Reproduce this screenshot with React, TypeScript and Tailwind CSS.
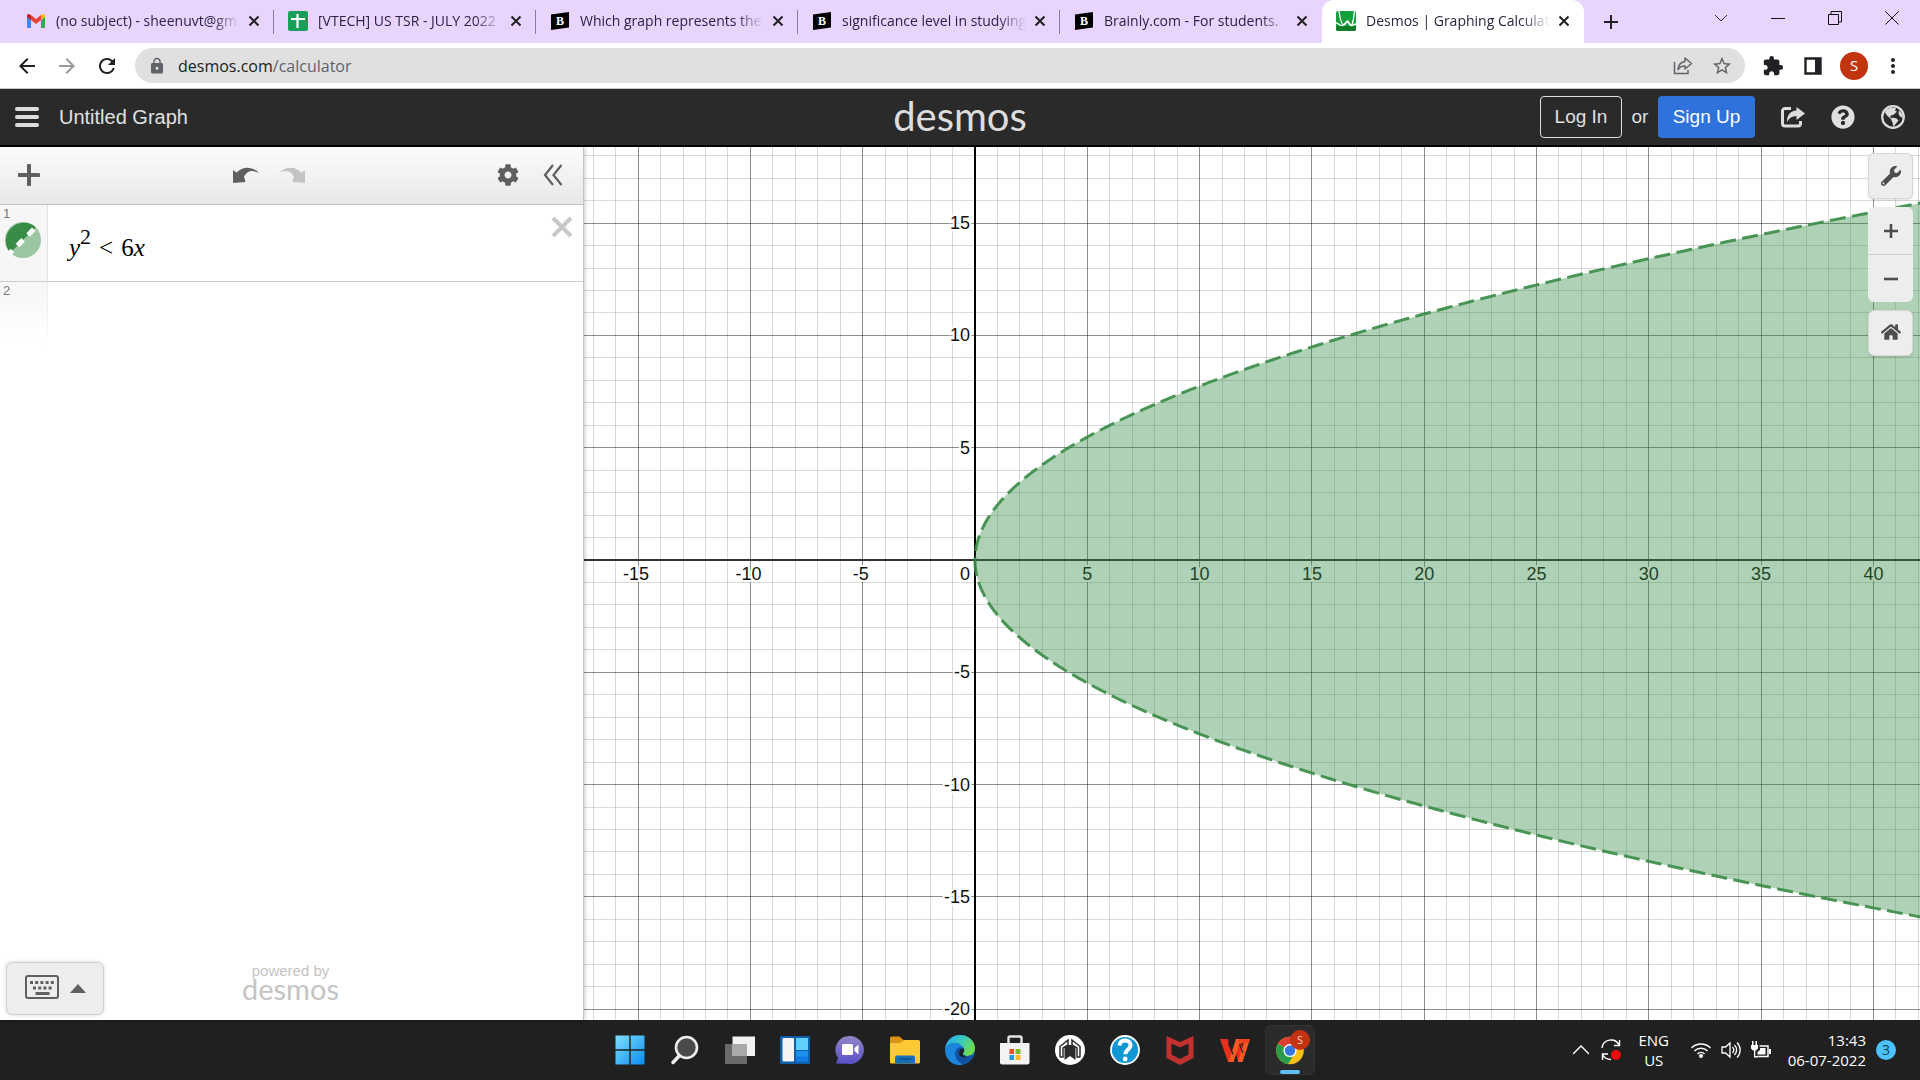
import React from 'react';
import { FaWrench, FaHome, FaCog, FaQuestionCircle } from 'react-icons/fa';
import { MdArrowBack, MdArrowForward, MdRefresh, MdLock, MdStarBorder, MdExtension, MdMoreVert } from 'react-icons/md';

const GmailIcon = () => (
  <svg viewBox="0 0 18 14" className="w-[18px] h-[14px]">
    <path d="M0 2v10.800a1.200 1.200 0 0 0 1.200 1.200H4V6z" fill="#4285f4" />
    <path d="M18 2v10.800a1.200 1.200 0 0 1-1.200 1.200H14V6z" fill="#34a853" />
    <path d="M14 1.500V6l4-3V2c0-2-2.200-2.600-3.500-1z" fill="#fbbc04" />
    <path d="M4 6V1l5 4 5-4v5L9 10z" fill="#ea4335" />
    <path d="M0 2c0-2 2.200-2.600 3.500-1L4 1.500V6L0 3z" fill="#c5221f" />
  </svg>
);

const SheetsIcon = () => (
  <svg viewBox="0 0 20 20" className="w-5 h-5">
    <rect width="20" height="20" rx="2" fill="#189f58" />
    <path d="M9.500 3v14M3 8h14" stroke="#fff" strokeWidth="2.200" />
  </svg>
);

const BrainlyIcon = () => (
  <svg viewBox="0 0 18 18" className="w-[18px] h-[18px]">
    <path d="M0 2.500L18 0v15.500L0 18z" fill="#000" />
    <text x="9" y="13" fontSize="12" fontWeight="700" textAnchor="middle" fill="#fff" fontFamily="Liberation Serif, serif">B</text>
  </svg>
);

const DesmosIcon = () => (
  <svg viewBox="0 0 20 20" className="w-5 h-5">
    <rect width="20" height="20" rx="2" fill="#12a03c" />
    <path d="M0 15h20v3a2 2 0 0 1-2 2H2a2 2 0 0 1-2-2z" fill="#0b7c2b" />
    <path d="M3 0c1 8 2.500 14 5 14 2 0 2-4 3.500-4s2 4 3.500 4c2 0 2.500-6 3.500-14" fill="none" stroke="#fff" strokeWidth="1.300" />
    <path d="M0 12c3 0 3 3 6 2.500S9 11 11 11s2 3 4 3.500 3-1.500 5-1.500" fill="none" stroke="#fff" strokeWidth="1.300" />
  </svg>
);

const CloseIcon = () => (
  <svg viewBox="0 0 12 12" className="w-3 h-3">
    <path d="M1.500 1.500l9 9M10.500 1.500l-9 9" stroke="#202124" strokeWidth="2" />
  </svg>
);

const tabs = [
  { title: '(no subject) - sheenuvt@gm', icon: <GmailIcon /> },
  { title: '[VTECH] US TSR - JULY 2022', icon: <SheetsIcon /> },
  { title: 'Which graph represents the', icon: <BrainlyIcon /> },
  { title: 'significance level in studying', icon: <BrainlyIcon /> },
  { title: 'Brainly.com - For students.', icon: <BrainlyIcon /> },
  { title: 'Desmos | Graphing Calculat', icon: <DesmosIcon />, active: true },
];

const TabStrip: React.FC = () => {
  return (
    <div className="flex h-[43px] shrink-0 items-stretch justify-between bg-[#e8d4fe]">
      <div className="flex min-w-0 pl-3">
        {tabs.map((tab, i) => (
          <div
            key={tab.title}
            className={
              tab.active
                ? 'relative flex w-[262px] items-center rounded-t-xl bg-white px-[14px] pb-[2px]'
                : 'relative flex w-[262px] items-center px-[14px] pb-[2px]'
            }
          >
            <span className="flex w-5 shrink-0 justify-center">{tab.icon}</span>
            <span className="ml-[10px] mr-2 flex-1 overflow-hidden whitespace-nowrap text-sm text-[#2b2340] [mask-image:linear-gradient(to_right,#000_85%,transparent)]">
              {tab.title}
            </span>
            <button aria-label={`Close tab ${i + 1}`}>
              <CloseIcon />
            </button>
            {i < 4 && <span className="absolute right-0 top-[10px] h-6 w-px bg-[#8d7ba3]" />}
          </div>
        ))}
        <button aria-label="New tab" className="ml-[17px] flex w-5 items-center justify-center">
          <svg viewBox="0 0 16 16" className="w-4 h-4">
            <path d="M8 1v14M1 8h14" stroke="#202124" strokeWidth="2" />
          </svg>
        </button>
      </div>
      <div className="flex h-9 items-center">
        <button aria-label="Search tabs" className="flex w-[57px] justify-center">
          <svg viewBox="0 0 14 14" className="w-[14px] h-[14px]">
            <path d="M1 4l6 6 6-6" fill="none" stroke="#333" />
          </svg>
        </button>
        <button aria-label="Minimize" className="flex w-[57px] justify-center">
          <svg viewBox="0 0 14 14" className="w-[14px] h-[14px]">
            <path d="M0 7.500h14" stroke="#111" />
          </svg>
        </button>
        <button aria-label="Restore" className="flex w-[57px] justify-center">
          <svg viewBox="0 0 14 14" className="w-[14px] h-[14px]">
            <path d="M.500 3.500h10v10H.500zM3 3V.500h10.500v10.500H11" fill="none" stroke="#111" />
          </svg>
        </button>
        <button aria-label="Close window" className="flex w-[57px] justify-center">
          <svg viewBox="0 0 14 14" className="w-[14px] h-[14px]">
            <path d="M.500.500l13 13M13.500.500l-13 13" stroke="#111" />
          </svg>
        </button>
      </div>
    </div>
  );
};

const AddressBar: React.FC = () => {
  return (
    <div className="flex h-[46px] shrink-0 items-center border-b border-[#c9c9c9] bg-white">
      <button aria-label="Back" className="ml-[15px] text-2xl text-[#202124]"><MdArrowBack /></button>
      <button aria-label="Forward" className="ml-4 text-2xl text-[#9a9a9a]"><MdArrowForward /></button>
      <button aria-label="Reload" className="ml-4 text-2xl text-[#202124]"><MdRefresh /></button>
      <div className="ml-4 flex h-[35px] flex-1 items-center rounded-full bg-[#e0e0e0] pl-[13px] pr-3">
        <MdLock className="text-lg text-[#5f6368]" />
        <a href="#url" className="ml-3 flex-1 text-base text-[#5f6368]">
          <span className="text-[#202124]">desmos.com</span>/calculator
        </a>
        <button aria-label="Share this page">
          <svg viewBox="0 0 20 20" className="w-5 h-5" fill="none" stroke="#5f6368" strokeWidth="1.500">
            <path d="M1.500 6v11.500H15V14" />
            <path d="M12 2l6.500 5.500L12 13v-3c-3.500 0-5.500 1-7 3.500.500-4.500 2.500-7.500 7-8z" strokeLinejoin="round" />
          </svg>
        </button>
        <button aria-label="Bookmark" className="ml-[18px] text-[22px] text-[#5f6368]"><MdStarBorder /></button>
      </div>
      <button aria-label="Extensions" className="ml-[17px] text-[22px] text-[#202124]"><MdExtension /></button>
      <button aria-label="Side panel" className="ml-5">
        <svg viewBox="0 0 18 18" className="w-[18px] h-[18px]">
          <path d="M1.500 1.500h15v15h-15z" fill="none" stroke="#202124" strokeWidth="2.400" />
          <path d="M11 1h6v16h-6z" fill="#202124" />
        </svg>
      </button>
      <button aria-label="Profile" className="ml-[18px] flex size-7 items-center justify-center rounded-full bg-[#c23310] text-[15px] text-white">S</button>
      <button aria-label="Menu" className="ml-[13px] mr-[15px] text-2xl text-[#202124]"><MdMoreVert /></button>
    </div>
  );
};

const Header: React.FC = () => {
  return (
    <header className="grid h-[58px] shrink-0 grid-cols-[1fr_auto_1fr] items-center border-b-2 border-black bg-[#2a2a2a] font-['Liberation_Sans',Arial,sans-serif] text-[19px] text-[#e0e0e0]">
      <div className="flex items-center pl-[15px]">
        <button aria-label="Open menu" className="flex w-6 flex-col gap-1">
          <span className="h-1 w-6 rounded-sm bg-[#dddddd]" />
          <span className="h-1 w-6 rounded-sm bg-[#dddddd]" />
          <span className="h-1 w-6 rounded-sm bg-[#dddddd]" />
        </button>
        <span className="ml-5 text-xl">Untitled Graph</span>
      </div>
      <a href="#home" className="pb-[2px] font-['Lato',sans-serif] text-[40px] leading-10 text-[#dddddd]">desmos</a>
      <div className="flex items-center justify-end pr-[15px]">
        <button className="h-[42px] w-[82px] rounded border border-[#dddddd]">Log In</button>
        <span className="w-9 text-center">or</span>
        <button className="h-[42px] w-[97px] rounded-sm bg-[#2f72dc] text-white">Sign Up</button>
        <button aria-label="Share graph" className="ml-[26px]">
          <svg viewBox="0 0 24 22" className="w-6 h-[22px]">
            <path d="M10 2.500H4a2.500 2.500 0 0 0-2.500 2.500v12.500A2.500 2.500 0 0 0 4 20h13a2.500 2.500 0 0 0 2.500-2.500V15" fill="none" stroke="#dddddd" strokeWidth="3" />
            <path d="M15.500 1L24 7.500 15.500 14v-4C11 10 8 12 6 16c0-7 3-11 9.500-11.500z" fill="#dddddd" />
          </svg>
        </button>
        <button aria-label="Help" className="ml-[26px] text-2xl"><FaQuestionCircle /></button>
        <button aria-label="Language" className="ml-[26px]">
          <svg viewBox="0 0 24 24" className="w-6 h-6">
            <circle cx="12" cy="12" r="10.800" fill="none" stroke="#dddddd" strokeWidth="2.200" />
            <path d="M5 5l5-2.500 5 .500-1 2.500 2 1-3 3-3 1-1 1.500 2 1.500-1 .500-4-3.500-2-3z" fill="#dddddd" />
            <path d="M11.500 12.500l4 1 2 2-2.500 3-2.500 3.500-1-4.500-1.500-3zM18 5l3 4 1 4-3-1.500-1.500-3z" fill="#dddddd" />
          </svg>
        </button>
      </div>
    </header>
  );
};

const ExpressionPanel: React.FC = () => {
  return (
    <section className="z-10 flex w-[584px] shrink-0 flex-col border-r border-[#c4c4c4] bg-white font-['Liberation_Sans',Arial,sans-serif] shadow-[0_0_5px_rgba(0,0,0,0.3)]">
      <div className="flex h-[58px] shrink-0 items-center border-b border-[#c4c4c4] bg-linear-to-b from-[#fcfcfc] to-[#e8e8e8] pb-[2px] pl-[18px] pr-5">
        <button aria-label="Add item">
          <svg viewBox="0 0 22 22" className="w-[22px] h-[22px]">
            <path d="M11 1.500v19M1.500 11h19" stroke="#5f5f5f" strokeWidth="4" strokeLinecap="round" />
          </svg>
        </button>
        <div className="flex flex-1 justify-center gap-5">
          <button aria-label="Undo">
            <svg viewBox="0 0 26 16" className="w-[26px] h-4">
              <path d="M0 3l3.500 2.500C10-1 19-1 26 6c-6-3-11-3-15 3.500l1.500 5.500L0 16z" fill="#5f5f5f" />
            </svg>
          </button>
          <button aria-label="Redo">
            <svg viewBox="0 0 26 16" className="w-[26px] h-4">
              <path d="M26 3l-3.500 2.500C16-1 7-1 0 6c6-3 11-3 15 3.500L13.500 15 26 16z" fill="#c4c4c4" />
            </svg>
          </button>
        </div>
        <div className="flex items-center gap-6 text-[22px] text-[#5f5f5f]">
          <button aria-label="Edit list"><FaCog /></button>
          <button aria-label="Hide list">
            <svg viewBox="0 0 20 22" className="w-5 h-[22px]" fill="none" stroke="#5f5f5f" strokeWidth="2.200">
              <path d="M10 1L2 11l8 10M18.500 1l-8 10 8 10" />
            </svg>
          </button>
        </div>
      </div>

      <div className="flex h-[77px] shrink-0 border-b border-[#cccccc]">
        <div className="flex w-12 flex-col border-r border-[#e2e2e2] bg-[#f6f6f6] pl-[3px] pt-px text-[13px] leading-4 text-[#777777]">
          <span>1</span>
          <button aria-label="Toggle curve" className="ml-[2px]">
            <svg viewBox="0 0 36 36" className="w-9 h-9">
              <circle cx="18" cy="18" r="18" fill="#9bc6a2" />
              <path d="M5.300 30.700A18 18 0 0 1 30.700 5.300z" fill="#388c46" />
              <path d="M4 32L32 4" stroke="#fff" strokeWidth="5" strokeDasharray="8 7" strokeDashoffset="3" />
            </svg>
          </button>
        </div>
        <div className="flex flex-1 items-start justify-between pl-[21px] pr-[10px] pt-[11px]">
          <div className="mt-[14px] font-['Liberation_Serif','Times_New_Roman',serif] text-[25px] leading-9 text-black">
            <i>y</i>
            <sup className="-top-3 text-[22px]">2</sup>
            <span className="mx-2">&lt;</span>6<i>x</i>
          </div>
          <button aria-label="Delete expression">
            <svg viewBox="0 0 22 22" className="w-[22px] h-[22px]">
              <path d="M2 2l18 18M20 2L2 20" stroke="#c8c8c8" strokeWidth="4" />
            </svg>
          </button>
        </div>
      </div>
      <div className="h-[66px] w-12 border-r border-[#eeeeee] bg-linear-to-b from-[#f6f6f6] to-white pl-[3px] pt-px text-[13px] leading-4 text-[#777777] [mask-image:linear-gradient(#000_40%,transparent)]">2</div>

      <div className="mt-auto flex items-end pb-[5px] pl-[6px]">
        <button aria-label="Show keypad" className="flex h-[53px] w-[98px] items-center justify-center gap-[11px] rounded-md border border-[#d0d0d0] bg-[#ededed] pb-1 shadow-[0_0_4px_rgba(0,0,0,0.15)]">
          <svg viewBox="0 0 34 24" className="w-[34px] h-6" fill="none" stroke="#5f5f5f">
            <rect x="1" y="1" width="32" height="22" rx="2" strokeWidth="2" />
            <path d="M5 7.500h25" strokeWidth="3" strokeDasharray="3 2.200" />
            <path d="M8 13h19" strokeWidth="3" strokeDasharray="3 2.200" />
            <path d="M10.500 18.500h14" strokeWidth="3" />
          </svg>
          <svg viewBox="0 0 16 9" className="mt-1 w-4 h-[9px]">
            <path d="M0 9L8 0l8 9z" fill="#5f5f5f" />
          </svg>
        </button>
        <div className="flex flex-1 flex-col items-center pb-4 pr-[106px] text-[#c4c4c4]">
          <span className="text-[15px] leading-4">powered by</span>
          <span className="font-['Lato',sans-serif] text-[29px] leading-5">desmos</span>
        </div>
      </div>
    </section>
  );
};

// graph geometry, in pixels from the top left of the canvas
const UNIT = 22.46;
const OX = 391;
const OY = 413;

const range = (from: number, to: number) => Array.from({ length: to - from + 1 }, (_, i) => from + i);

const point = (y: number) => `${(OX + (y * y * UNIT) / 6).toFixed(2)} ${(OY - y * UNIT).toFixed(2)}`;

const branch = (sign: number) => 'M' + range(0, 240).map((i) => point((sign * i) / 12)).join('L');

const region = 'M' + range(-240, 240).map((i) => point(i / 12)).join('L') + 'Z';

const GridLine = ({ n, vertical }: { n: number; vertical?: boolean }) => {
  const p = Math.floor((vertical ? OX : OY) + n * UNIT) + 0.5;
  const major = n % 5 === 0;
  return (
    <line
      x1={vertical ? p : 0}
      x2={vertical ? p : '100%'}
      y1={vertical ? 0 : p}
      y2={vertical ? '100%' : p}
      stroke="#000"
      strokeOpacity={major ? 0.45 : 0.15}
    />
  );
};

const Graph: React.FC = () => {
  return (
    <div className="relative min-w-0 flex-1 overflow-hidden bg-white">
      <svg className="absolute inset-0 h-full w-full" role="img" aria-label="Graph of y squared less than 6x">
        {range(-17, 60).map((n) => n !== 0 && <GridLine key={n} n={n} vertical />)}
        {range(-18, 30).map((n) => n !== 0 && <GridLine key={n} n={n} />)}
        <path d={`M${OX} 0V2000`} stroke="#000" strokeWidth="2" />
        <path d={`M0 ${OY}H3000`} stroke="#333" strokeWidth="2" />
        <g fontFamily="Liberation Sans, Arial, sans-serif" fontSize="18" fill="#111" stroke="#fff" strokeWidth="4" paintOrder="stroke">
          {[-15, -10, -5, 5, 10, 15, 20, 25, 30, 35, 40].map((n) => (
            <text key={n} x={OX + n * UNIT - (n < 0 ? 2 : 0)} y={OY + 20} textAnchor="middle">{n}</text>
          ))}
          {[15, 10, 5, -5, -10, -15, -20].map((n) => (
            <text key={n} x={OX - 5} y={OY - n * UNIT + 6} textAnchor="end">{n}</text>
          ))}
          <text x={OX - 5} y={OY + 20} textAnchor="end">0</text>
        </g>
        <path d={region} fill="#388c46" fillOpacity="0.4" />
        <path d={branch(1)} fill="none" stroke="#388c46" strokeOpacity="0.9" strokeWidth="3" strokeDasharray="16 6.400" strokeDashoffset="-9" />
        <path d={branch(-1)} fill="none" stroke="#388c46" strokeOpacity="0.9" strokeWidth="3" strokeDasharray="16 6.400" />
      </svg>
      <div className="absolute right-[7px] top-[6px] flex w-[45px] flex-col text-[#4d4d4d]">
        <button aria-label="Graph settings" className="flex h-[46px] items-center justify-center rounded-md border border-[#d6d6d6] bg-[#ededed] text-xl shadow-sm">
          <FaWrench />
        </button>
        <button aria-label="Zoom in" className="mt-2 flex h-12 items-center justify-center rounded-t-md border-b border-[#d0d0d0] bg-[#ededed]">
          <svg viewBox="0 0 14 14" className="w-[14px] h-[14px]"><path d="M7 0v14M0 7h14" stroke="#4d4d4d" strokeWidth="2.600" /></svg>
        </button>
        <button aria-label="Zoom out" className="flex h-[47px] items-center justify-center rounded-b-md bg-[#ededed]">
          <svg viewBox="0 0 14 14" className="w-[14px] h-[14px]"><path d="M0 7h14" stroke="#4d4d4d" strokeWidth="2.600" /></svg>
        </button>
        <button aria-label="Default view" className="mt-2 flex h-[46px] items-center justify-center rounded-md border border-[#d6d6d6] bg-[#ededed] pb-[2px] text-xl shadow-sm">
          <FaHome />
        </button>
      </div>
    </div>
  );
};

const apps = [
  {
    name: 'Start',
    icon: (
      <>
        <defs>
          <linearGradient id="win" x1="0" y1="0" x2="1" y2="1">
            <stop offset="0" stopColor="#7fe0ff" />
            <stop offset="1" stopColor="#0a8cf0" />
          </linearGradient>
        </defs>
        <path d="M.500.500H14.300V14.300H.500zM15.700.500H29.500V14.300H15.700zM.500 15.700H14.300V29.500H.500zM15.700 15.700H29.500V29.500H15.700z" fill="url(#win)" />
      </>
    ),
  },
  {
    name: 'Search',
    icon: (
      <>
        <path d="M10 20l-7 7.500" stroke="#eee" strokeWidth="3.500" strokeLinecap="round" />
        <circle cx="16.500" cy="12.500" r="10.500" fill="#4a4a4a" stroke="#eee" strokeWidth="2.600" />
      </>
    ),
  },
  {
    name: 'Task View',
    icon: (
      <>
        <path d="M0 9h22v20H0z" fill="#6a6a6a" />
        <path d="M7.500 1.500H30v19.500H7.500z" fill="#f2f2f2" />
        <path d="M7.500 9H22v12H7.500z" fill="#a9a9a9" />
      </>
    ),
  },
  {
    name: 'Widgets',
    icon: (
      <>
        <rect y="1" width="30" height="28" rx="1" fill="#0f5ea8" />
        <rect x="2.500" y="3" width="11.500" height="23.500" rx="1" fill="#f4f4f4" />
        <path d="M16 3h12v12H16z" fill="#5fd0fb" />
        <path d="M16 16h12v10.500H16z" fill="#1e90ee" />
        <path d="M16 21.500h12v5H16z" fill="#137adf" />
      </>
    ),
  },
  {
    name: 'Chat',
    icon: (
      <>
        <defs>
          <linearGradient id="chat" x1="0" y1="0" x2="0" y2="1">
            <stop offset="0" stopColor="#8f86c6" />
            <stop offset="1" stopColor="#5b50c8" />
          </linearGradient>
        </defs>
        <path d="M15 1a14 14 0 1 1-3 27.700L1 28.500l2-5.500A14 14 0 0 1 15 1z" fill="url(#chat)" />
        <rect x="7" y="9" width="11" height="11" rx="1.500" fill="#fff" />
        <path d="M19.500 13l4-3.500v10l-4-3.500z" fill="#fff" />
      </>
    ),
  },
  {
    name: 'File Explorer',
    icon: (
      <>
        <path d="M0 3a1.500 1.500 0 0 1 1.500-1.500h8l4 3.500V8H0z" fill="#d9930d" />
        <path d="M0 8h10l4-3h14.500A1.500 1.500 0 0 1 30 6.500V27a1.500 1.500 0 0 1-1.500 1.500h-27A1.500 1.500 0 0 1 0 27z" fill="#fcc934" />
        <path d="M5 28.500v-6a2 2 0 0 1 2-2h16a2 2 0 0 1 2 2v6z" fill="#1672b8" />
        <path d="M9 24h12" stroke="#0c4f86" strokeWidth="1.500" />
      </>
    ),
  },
  {
    name: 'Edge',
    icon: (
      <>
        <defs>
          <linearGradient id="edgeTop" x1="0" y1="0" x2="1" y2="0.500">
            <stop offset="0" stopColor="#2ba6e8" />
            <stop offset="0.500" stopColor="#35c6c8" />
            <stop offset="1" stopColor="#6fdc4e" />
          </linearGradient>
        </defs>
        <circle cx="15" cy="15" r="15" fill="#1262b8" />
        <path d="M0 14C1 6 7 0 15 0c9 0 15 6.500 15 13 0 5-3.500 8-7.500 8-3 0-5-1-4.500-2.500 1.500-2 1.500-3 .800-5C17 10 13.500 8 10 8 5 8 1 11 0 14z" fill="url(#edgeTop)" />
        <path d="M0 14c1-3 5-6 10-6 3.500 0 7 2 8.500 5-3-2-7 0-8 4-1 5 2 10 7.500 12.500-8 2.500-18-3.500-18-15.500z" fill="#1a86dc" />
        <path d="M10.500 17c1-4 5-6 8-4 .700 2 .700 3-.800 5-.500 1.500 1.800 3 4.800 3 3 0 5-1 6-1-2 5-6 8-10.500 9-5.500-2-8.500-7-7.500-12z" fill="#10529f" />
        <path d="M14 17c.500-2 2.500-4 4.500-3.500 1 1.500.500 3.500-.800 5-.500 1.500 2 3.500 5 3.500-5 1.500-9.700-1-8.700-5z" fill="#1d2229" />
      </>
    ),
  },
  {
    name: 'Microsoft Store',
    icon: (
      <>
        <path d="M8.500 9V3A1.500 1.500 0 0 1 10 1.500h10A1.500 1.500 0 0 1 21.500 3v6" fill="none" stroke="#e4e4e4" strokeWidth="2.400" />
        <path d="M0 8h29.500v19.500a2 2 0 0 1-2 2h-25.500a2 2 0 0 1-2-2z" fill="#f3f3f3" />
        <path d="M9.500 14H14v5H9.500z" fill="#e8502a" />
        <path d="M15.500 14h5v5h-5z" fill="#7db82f" />
        <path d="M9.500 20H14v5H9.500z" fill="#1f9ddf" />
        <path d="M15.500 20h5v5h-5z" fill="#f7b924" />
      </>
    ),
  },
  {
    name: 'Support Assistant',
    icon: (
      <>
        <circle cx="15" cy="15" r="15" fill="#fff" />
        <path d="M9.500 25V12.500L13 10h4l3.500 2.500V25L15 21z" fill="#2c2c2c" />
        <path d="M5 22V11.500L13 5v5M25 22V11.500L17 5v5M5 22h3V13l5-3M25 22h-3V13l-5-3" fill="none" stroke="#2c2c2c" strokeWidth="1.500" />
      </>
    ),
  },
  {
    name: 'Get Help',
    icon: (
      <>
        <circle cx="15" cy="15" r="14" fill="#1197d4" stroke="#fff" strokeWidth="1.800" />
        <path d="M9.500 10.500c.300-3.500 2.800-5 5.600-5 3.200 0 5.500 1.800 5.500 4.800 0 4.200-5.300 4.400-5.300 9" fill="none" stroke="#fff" strokeWidth="4" />
        <circle cx="15.200" cy="24" r="2.400" fill="#fff" />
      </>
    ),
  },
  {
    name: 'McAfee',
    icon: <path d="M1.500 1L15 7l13.500-6v22L15 30 1.500 23zM6.500 8.500V19.500l8.500 4.500 8.500-4.500V8.500L15 12.500z" fill="#c0312f" fillRule="evenodd" />,
  },
  {
    name: 'WPS Office',
    icon: (
      <>
        <path d="M0 4h7.500l5.500 15-2.500 8H8z" fill="#e5301c" />
        <path d="M14.500 10l2-6h3l4.500 13-3 10H18z" fill="#e5301c" />
        <path d="M8.500 27L16 4h5l-7.500 23z" fill="#ff5a24" />
        <path d="M18 27L25 4h5l-7.500 23z" fill="#ff5a24" />
        <path d="M18.500 4H30l-1.500 4.500h-10z" fill="#f0421f" />
        <path d="M13 19.500L8.500 8M23 18L19.500 9" stroke="#202020" strokeWidth="1.200" />
      </>
    ),
  },
  {
    name: 'Chrome',
    icon: (
      <>
        <circle cx="15" cy="15.500" r="13.800" fill="#fbc116" />
        <path d="M15 15.500L3 8.600A13.800 13.800 0 0 0 13 29.150l6.500-11z" fill="#2a9c4a" />
        <path d="M15 15.500L3 8.600a13.800 13.800 0 0 1 24 .400H15z" fill="#dd3f31" />
        <circle cx="15" cy="15.500" r="6.600" fill="#fff" />
        <circle cx="15" cy="15.500" r="5.200" fill="#3478e8" />
      </>
    ),
  },
];

const Taskbar: React.FC = () => {
  return (
    <footer className="grid h-[60px] shrink-0 grid-cols-[1fr_auto_1fr] items-center bg-[#202020] text-white">
      <div />
      <div className="flex">
        {apps.map((app) => (
          <button key={app.name} aria-label={app.name} className="flex w-[55px] justify-center">
            <span
              className={
                app.name === 'Chrome'
                  ? 'relative flex size-[50px] items-center justify-center rounded-md border border-[#333333] bg-[#2b2b2b]'
                  : 'flex size-[50px] items-center justify-center'
              }
            >
              <svg viewBox="0 0 30 30" className="w-[30px] h-[30px]">{app.icon}</svg>
              {app.name === 'Chrome' && (
                <>
                  <span className="absolute right-1 top-1 flex size-5 items-center justify-center rounded-full bg-[#c23310] text-[11px] text-[#f0d0c0]">S</span>
                  <span className="absolute bottom-0 h-1 w-5 rounded-full bg-[#60bdf5]" />
                </>
              )}
            </span>
          </button>
        ))}
      </div>
      <div className="flex items-center justify-end pr-6 text-[15px] leading-5">
        <button aria-label="Show hidden icons">
          <svg viewBox="0 0 16 10" className="w-4 h-[10px]"><path d="M0 9l8-8 8 8" fill="none" stroke="#fff" strokeWidth="1.400" /></svg>
        </button>
        <svg viewBox="0 0 20 22" className="ml-3 w-5 h-[22px]" fill="none" stroke="#fff" strokeWidth="1.400">
          <path d="M1 9A9 9 0 0 1 18 6M18.500 1v5.500H13M10 20.500c-4 0-7-2-8.500-5M1.500 21v-6H7" />
          <circle cx="15" cy="16" r="5" fill="#f00c0c" stroke="none" />
        </svg>
        <button className="ml-[17px] w-8 text-center">ENG<br />US</button>
        <svg viewBox="0 0 20 16" className="ml-[21px] w-5 h-4" fill="none" stroke="#fff" strokeWidth="1.500">
          <path d="M.500 6a13.500 13.500 0 0 1 19 0M3.500 9a9.300 9.300 0 0 1 13 0M6.500 12a5 5 0 0 1 7 0" />
          <circle cx="10" cy="14" r="2" fill="#fff" stroke="none" />
        </svg>
        <svg viewBox="0 0 20 18" className="ml-[10px] w-5 h-[18px]" fill="none" stroke="#fff" strokeWidth="1.300">
          <path d="M1 6h3.500L9 2v14l-4.500-4H1zM11.500 6a4.500 4.500 0 0 1 0 6M13.500 4a7 7 0 0 1 0 10M16 1.500a10.500 10.500 0 0 1 0 15" />
        </svg>
        <svg viewBox="0 0 20 18" className="ml-[10px] w-5 h-[18px]">
          <path d="M0 4h7v3.500L5 9.500H2L0 7.500zM1 0h1.500v4H1zM4.500 0H6v4H4.500zM3 9h1.300v6H7v1.500H3z" fill="#fff" />
          <path d="M8.500 5H17v10.500H6" fill="none" stroke="#fff" strokeWidth="1.500" />
          <path d="M9 7h5.500v6.500H6.500V11L9 9zM18 8h2v5h-2z" fill="#fff" />
        </svg>
        <button className="ml-[17px] text-right">13:43<br />06-07-2022</button>
        <span className="ml-[10px] flex size-5 items-center justify-center rounded-full bg-[#4cc2ff] text-sm text-[#1b3a4d]">3</span>
      </div>
    </footer>
  );
};

const App: React.FC = () => {
  return (
    <div className="flex h-screen flex-col overflow-hidden bg-white font-['Open_Sans','Noto_Sans',sans-serif]">
      <TabStrip />
      <AddressBar />
      <Header />
      <main className="flex min-h-0 flex-1">
        <ExpressionPanel />
        <Graph />
      </main>
      <Taskbar />
    </div>
  );
};

export default App;
